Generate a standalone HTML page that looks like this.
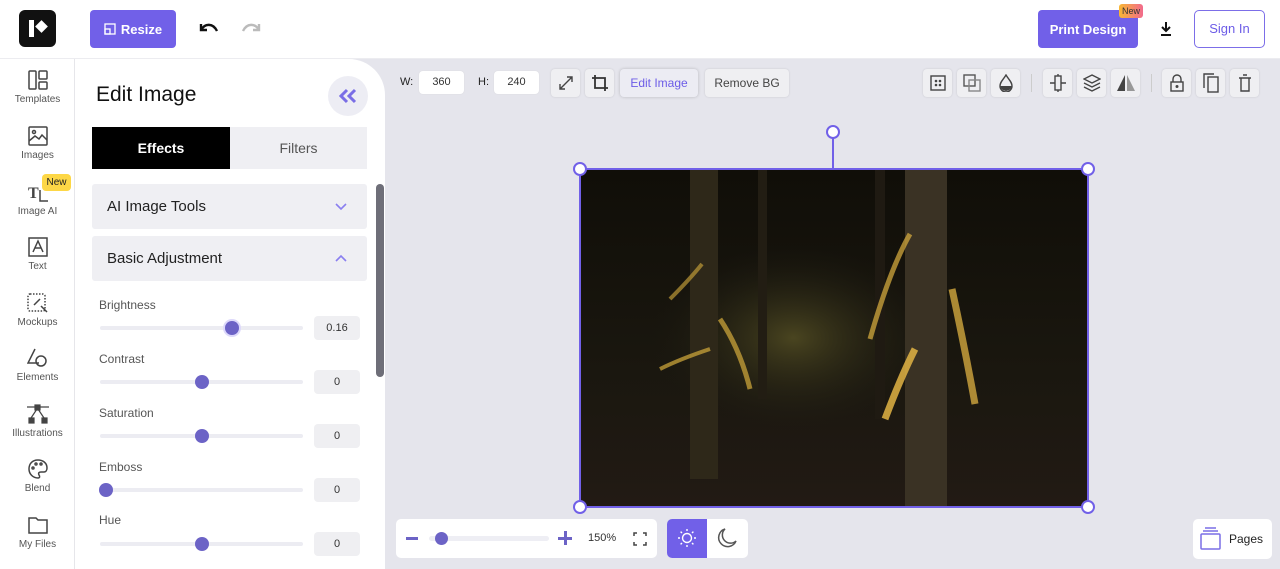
<!DOCTYPE html>
<html><head><meta charset="utf-8"><style>
*{box-sizing:border-box;margin:0;padding:0}
body{width:1280px;height:569px;overflow:hidden;font-family:"Liberation Sans",sans-serif;background:#e5e5ec;position:relative;color:#222}
.abs{position:absolute}
.top{left:0;top:0;width:1280px;height:59px;background:#fff;border-bottom:1px solid #ececf0}
.btnp{background:#7160e8;color:#fff;font-weight:bold;font-size:13px;border-radius:4px;display:flex;align-items:center;justify-content:center}
.side{left:0;top:59px;width:75px;height:510px;background:#fff;border-right:1px solid #e6e6ea}
.si{position:absolute;left:0;width:75px;text-align:center;font-size:10px;color:#555}
.si svg{display:block;margin:0 auto 4px}
.panel{left:75px;top:59px;width:310px;height:510px;background:#fff;border-top-right-radius:36px}
.acc{position:absolute;left:17px;width:275px;height:45px;background:#efeff3;border-radius:3px;font-size:15px;padding:14px 15px;color:#222}
.lab{position:absolute;left:24px;font-size:12px;color:#555}
.track{position:absolute;left:25px;width:203px;height:4px;background:#ececf2;border-radius:2px}
.knob{position:absolute;width:14px;height:14px;border-radius:50%;background:#6c63c6}
.val{position:absolute;left:239px;width:46px;height:24px;background:#efeff2;border-radius:4px;font-size:11px;color:#333;text-align:center;line-height:24px}
.tb{position:absolute;top:69px;height:28px;background:#efeff2;border-radius:4px;box-shadow:0 0 2px rgba(0,0,0,.12)}
.ti{position:absolute;top:69px;width:29px;height:28px;background:#efeff2;border-radius:4px;box-shadow:0 0 2px rgba(0,0,0,.12);display:flex;align-items:center;justify-content:center}
.hd{position:absolute;width:14px;height:14px;border:2px solid #7160e8;background:#fff;border-radius:50%}
</style></head><body>
<div class="abs top"></div>
<div class="abs" style="left:19px;top:10px;width:37px;height:37px;background:#111;border-radius:6px"><div class="abs" style="left:10px;top:10px;width:5px;height:17px;background:#fff"></div><div class="abs" style="left:18px;top:12px;width:9px;height:9px;background:#fff;transform:rotate(45deg)"></div></div>
<div class="abs btnp" style="left:90px;top:10px;width:86px;height:38px"><svg width="12" height="12" viewBox="0 0 12 12" style="margin-right:5px"><rect x="1" y="1" width="10" height="10" fill="none" stroke="#fff" stroke-width="1.3"/><rect x="1" y="6" width="5" height="5" fill="none" stroke="#fff" stroke-width="1.3"/></svg>Resize</div>
<svg class="abs" style="left:197px;top:20px" width="22" height="16" viewBox="0 0 22 16"><path d="M4 4 L4 10 L10 10" fill="none" stroke="#111" stroke-width="2.4"/><path d="M4 10 C8 3 16 3 20 11" fill="none" stroke="#111" stroke-width="2.4"/></svg>
<svg class="abs" style="left:241px;top:20px" width="22" height="16" viewBox="0 0 22 16"><path d="M18 4 L18 10 L12 10" fill="none" stroke="#bbb" stroke-width="2.4"/><path d="M18 10 C14 3 6 3 2 11" fill="none" stroke="#bbb" stroke-width="2.4"/></svg>
<div class="abs btnp" style="left:1038px;top:10px;width:100px;height:38px">Print Design</div>
<div class="abs" style="left:1119px;top:4px;width:24px;height:14px;background:linear-gradient(90deg,#f8b732,#f26a8d);border-radius:3px;font-size:9px;color:#333;text-align:center;line-height:14px">New</div>
<svg class="abs" style="left:1159px;top:21px" width="14" height="16" viewBox="0 0 14 16"><path d="M7 1 V10 M3 6 L7 10 L11 6 M2 14 H12" fill="none" stroke="#111" stroke-width="2"/></svg>
<div class="abs" style="left:1194px;top:10px;width:71px;height:38px;border:1.5px solid #7c6ee8;border-radius:5px;color:#6c5ce7;font-size:13px;text-align:center;line-height:35px">Sign In</div>

<div class="abs side">
<div class="si" style="top:11px"><svg width="20" height="20" viewBox="0 0 20 20" fill="none" stroke="#444" stroke-width="1.5"><rect x="1" y="1" width="7" height="18" rx="1"/><rect x="11" y="1" width="8" height="8" rx="1"/><rect x="11" y="12" width="8" height="7" rx="1"/></svg>Templates</div>
<div class="si" style="top:67px"><svg width="20" height="20" viewBox="0 0 20 20" fill="none" stroke="#444" stroke-width="1.5"><rect x="1" y="1" width="18" height="18" rx="1"/><circle cx="6" cy="6" r="1.5"/><path d="M1 15 L7 10 L11 13 L14 9 L19 14"/></svg>Images</div>
<div class="si" style="top:123px"><svg width="24" height="20" viewBox="0 0 24 20"><text x="2" y="16" font-family="Liberation Serif" font-size="16" font-weight="bold" fill="#444">T</text><path d="M14 8 V19 L22 19" fill="none" stroke="#444" stroke-width="1.5"/></svg>Image AI</div>
<div class="si" style="top:178px"><svg width="20" height="20" viewBox="0 0 20 20" fill="none" stroke="#444" stroke-width="1.5"><rect x="1" y="1" width="18" height="18"/><path d="M5 15 L10 4 L15 15 M7 11 H13"/></svg>Text</div>
<div class="si" style="top:234px"><svg width="22" height="20" viewBox="0 0 22 20" fill="none" stroke="#444" stroke-width="1.5"><rect x="1" y="1" width="17" height="17" rx="2" stroke-dasharray="1.5 1.5"/><path d="M7 12 L13 6 M14 13 L20 19"/></svg>Mockups</div>
<div class="si" style="top:289px"><svg width="22" height="20" viewBox="0 0 22 20" fill="none" stroke="#444" stroke-width="1.5"><path d="M8 1 L1 15 H12"/><circle cx="14" cy="13" r="5"/></svg>Elements</div>
<div class="si" style="top:345px"><svg width="24" height="20" viewBox="0 0 24 20" fill="#444" stroke="#444" stroke-width="1.2"><rect x="9" y="1" width="5" height="5"/><rect x="3" y="14" width="5" height="5"/><rect x="16" y="14" width="5" height="5"/><path d="M1 3 H23 M5 14 L11 5 M18 14 L12 5" fill="none"/></svg>Illustrations</div>
<div class="si" style="top:400px"><svg width="20" height="20" viewBox="0 0 20 20" fill="none" stroke="#444" stroke-width="1.5"><path d="M10 1 C4 1 1 5 1 10 C1 15 5 19 10 19 C12 19 12 17 11 16 C10 14 11 13 13 13 H16 C18 13 19 11 19 9 C19 4 15 1 10 1Z"/><circle cx="5" cy="9" r="1"/><circle cx="8" cy="5" r="1"/><circle cx="13" cy="5" r="1"/></svg>Blend</div>
<div class="si" style="top:456px"><svg width="20" height="20" viewBox="0 0 20 20" fill="none" stroke="#444" stroke-width="1.5"><path d="M1 3 H8 L10 5 H19 V18 H1 Z"/></svg>My Files</div>
<div class="abs" style="left:42px;top:115px;width:29px;height:17px;background:#fdd746;border-radius:4px;font-size:10px;color:#222;text-align:center;line-height:17px">New</div>
</div>

<div class="abs panel">
<div class="abs" style="left:21px;top:24px;font-size:21px;color:#111">Edit Image</div>
<div class="abs" style="left:253px;top:17px;width:40px;height:40px;border-radius:50%;background:#ededf4"><svg class="abs" style="left:10px;top:12px" width="20" height="16" viewBox="0 0 20 16" fill="none" stroke="#7a6ee6" stroke-width="3"><path d="M9 2 L3 8 L9 14 M17 2 L11 8 L17 14"/></svg></div>
<div class="abs" style="left:17px;top:68px;width:138px;height:42px;background:#000;color:#fff;font-weight:bold;font-size:14px;text-align:center;line-height:42px">Effects</div>
<div class="abs" style="left:155px;top:68px;width:137px;height:42px;background:#efeff3;color:#555;font-size:14px;text-align:center;line-height:42px">Filters</div>
<div class="acc" style="top:125px">AI Image Tools<svg class="abs" style="right:20px;top:19px" width="12" height="8" viewBox="0 0 12 8" fill="none" stroke="#8a7ff0" stroke-width="1.6"><path d="M1 1 L6 6 L11 1"/></svg></div>
<div class="acc" style="top:177px">Basic Adjustment<svg class="abs" style="right:20px;top:18px" width="12" height="8" viewBox="0 0 12 8" fill="none" stroke="#8a7ff0" stroke-width="1.6"><path d="M1 7 L6 2 L11 7"/></svg></div>
<div class="lab" style="top:239px">Brightness</div><div class="track" style="top:267px"></div><div class="knob" style="left:150px;top:262px;box-shadow:0 0 0 2px #ddd9fb"></div><div class="val" style="top:257px">0.16</div>
<div class="lab" style="top:293px">Contrast</div><div class="track" style="top:321px"></div><div class="knob" style="left:120px;top:316px"></div><div class="val" style="top:311px">0</div>
<div class="lab" style="top:347px">Saturation</div><div class="track" style="top:375px"></div><div class="knob" style="left:120px;top:370px"></div><div class="val" style="top:365px">0</div>
<div class="lab" style="top:401px">Emboss</div><div class="track" style="top:429px"></div><div class="knob" style="left:24px;top:424px"></div><div class="val" style="top:419px">0</div>
<div class="lab" style="top:454px">Hue</div><div class="track" style="top:483px"></div><div class="knob" style="left:120px;top:478px"></div><div class="val" style="top:473px">0</div>
<div class="abs" style="left:301px;top:125px;width:8px;height:193px;background:#6e6e78;border-radius:4px"></div>
</div>

<div class="abs" style="left:400px;top:76px;font-size:11px;color:#222">W:</div>
<div class="abs" style="left:418px;top:70px;width:47px;height:25px;background:#fff;border:1px solid #e2e2e8;border-radius:5px;font-size:11px;text-align:center;line-height:23px;color:#333">360</div>
<div class="abs" style="left:478px;top:76px;font-size:11px;color:#222">H:</div>
<div class="abs" style="left:493px;top:70px;width:47px;height:25px;background:#fff;border:1px solid #e2e2e8;border-radius:5px;font-size:11px;text-align:center;line-height:23px;color:#333">240</div>
<div class="ti" style="left:551px"><svg width="16" height="16" viewBox="0 0 16 16" fill="none" stroke="#444" stroke-width="1.4"><path d="M2 14 L14 2 M9 2 H14 V7 M2 9 V14 H7"/></svg></div>
<div class="ti" style="left:585px"><svg width="18" height="18" viewBox="0 0 18 18" fill="none" stroke="#333" stroke-width="1.8"><path d="M4 1 V14 H17 M1 4 H14 V17"/></svg></div>
<div class="tb" style="left:620px;width:78px;background:#ececf3;color:#6c5ce7;font-size:12px;text-align:center;line-height:28px;box-shadow:0 0 3px rgba(0,0,0,.2)">Edit Image</div>
<div class="tb" style="left:705px;width:84px;color:#444;font-size:12px;text-align:center;line-height:28px">Remove BG</div>
<div class="ti" style="left:923px"><svg width="16" height="16" viewBox="0 0 16 16" fill="none" stroke="#444" stroke-width="1.4"><rect x="1" y="1" width="14" height="14"/><circle cx="6" cy="6" r=".6" fill="#444"/><circle cx="10" cy="6" r=".6" fill="#444"/><circle cx="6" cy="10" r=".6" fill="#444"/><circle cx="10" cy="10" r=".6" fill="#444"/></svg></div>
<div class="ti" style="left:957px"><svg width="18" height="18" viewBox="0 0 18 18" fill="none" stroke="#555" stroke-width="1.4"><rect x="1" y="1" width="11" height="11"/><rect x="6" y="6" width="11" height="11" stroke="#888"/></svg></div>
<div class="ti" style="left:991px"><svg width="14" height="18" viewBox="0 0 14 18"><path d="M7 1 C4 6 1 8 1 12 A6 6 0 0 0 13 12 C13 8 10 6 7 1Z" fill="none" stroke="#444" stroke-width="1.4"/><path d="M1.5 12 H12.5 A5.5 5 0 0 1 1.5 12Z" fill="#444"/></svg></div>
<div class="abs" style="left:1031px;top:74px;width:1px;height:18px;background:#ccc"></div>
<div class="ti" style="left:1043px"><svg width="18" height="20" viewBox="0 0 18 20" fill="none" stroke="#444" stroke-width="1.4"><path d="M1 10 H17 M9 1 V3 M9 17 V19"/><rect x="6" y="3" width="6" height="14" fill="#efeff2"/></svg></div>
<div class="ti" style="left:1077px"><svg width="18" height="18" viewBox="0 0 18 18" fill="none" stroke="#444" stroke-width="1.4"><path d="M9 1 L17 5 L9 9 L1 5Z M1 9 L9 13 L17 9 M1 13 L9 17 L17 13"/></svg></div>
<div class="ti" style="left:1111px"><svg width="20" height="18" viewBox="0 0 20 18"><path d="M9 1 L1 17 H9Z" fill="#444"/><path d="M11 1 L19 17 H11Z" fill="#999"/></svg></div>
<div class="abs" style="left:1151px;top:74px;width:1px;height:18px;background:#ccc"></div>
<div class="ti" style="left:1162px"><svg width="14" height="18" viewBox="0 0 14 18" fill="none" stroke="#444" stroke-width="1.4"><rect x="1" y="8" width="12" height="9"/><path d="M3 8 V5 A4 4 0 0 1 11 5 V8"/><circle cx="7" cy="12.5" r=".8" fill="#444"/></svg></div>
<div class="ti" style="left:1196px"><svg width="16" height="20" viewBox="0 0 16 20" fill="none" stroke="#444" stroke-width="1.4"><rect x="5" y="4" width="10" height="15"/><path d="M1 15 V1 H11"/></svg></div>
<div class="ti" style="left:1230px"><svg width="14" height="18" viewBox="0 0 14 18" fill="none" stroke="#444" stroke-width="1.4"><path d="M1 4 H13 M5 1 H9 M3 4 V17 H11 V4"/></svg></div>

<div class="abs" style="left:832px;top:138px;width:2px;height:31px;background:#7160e8"></div>
<div class="hd" style="left:826px;top:125px"></div>
<svg class="abs" style="left:580px;top:169px" width="508" height="338" viewBox="0 0 508 338">
<defs><radialGradient id="g1" cx="0.42" cy="0.5" r="0.28"><stop offset="0" stop-color="#4a4520"/><stop offset="1" stop-color="#1c1a12" stop-opacity="0"/></radialGradient>
<linearGradient id="bg" x1="0" y1="0" x2="0" y2="1"><stop offset="0" stop-color="#100e08"/><stop offset=".6" stop-color="#1a170f"/><stop offset="1" stop-color="#221a14"/></linearGradient></defs>
<rect width="508" height="338" fill="url(#bg)"/>
<rect width="508" height="338" fill="url(#g1)"/>
<rect x="110" y="0" width="28" height="310" fill="#2e2819"/>
<rect x="178" y="0" width="9" height="230" fill="#221d13"/>
<rect x="325" y="0" width="42" height="338" fill="#3a3224"/>
<rect x="295" y="0" width="10" height="250" fill="#1f1a12"/>
<path d="M80 200 Q100 190 130 180" stroke="#c9a33a" stroke-width="4" fill="none" opacity=".75"/>
<path d="M140 150 Q160 180 170 220" stroke="#c9a33a" stroke-width="5" fill="none" opacity=".75"/>
<path d="M90 130 Q110 110 122 95" stroke="#c9a33a" stroke-width="4" fill="none" opacity=".65"/>
<path d="M290 170 Q310 100 330 65" stroke="#d2a83e" stroke-width="5" fill="none" opacity=".75"/>
<path d="M305 250 Q320 210 335 180" stroke="#e2b444" stroke-width="7" fill="none" opacity=".85"/>
<path d="M372 120 Q385 180 395 235" stroke="#d2a83e" stroke-width="7" fill="none" opacity=".8"/>
</svg>
<div class="abs" style="left:579px;top:168px;width:510px;height:340px;border:2px solid #7160e8"></div>
<div class="hd" style="left:573px;top:162px"></div><div class="hd" style="left:1081px;top:162px"></div>
<div class="hd" style="left:573px;top:500px"></div><div class="hd" style="left:1081px;top:500px"></div>

<div class="abs" style="left:396px;top:519px;width:261px;height:39px;background:#fff;border-radius:5px"></div>
<div class="abs" style="left:406px;top:537px;width:12px;height:2.5px;background:#6c63c6"></div>
<div class="abs" style="left:429px;top:536px;width:120px;height:5px;background:#eeeef4;border-radius:3px"></div>
<div class="abs knob" style="left:435px;top:532px;width:13px;height:13px"></div>
<div class="abs" style="left:558px;top:537px;width:14px;height:2.5px;background:#6c63c6"></div>
<div class="abs" style="left:564px;top:531px;width:2.5px;height:14px;background:#6c63c6"></div>
<div class="abs" style="left:588px;top:532px;font-size:11px;color:#333">150%</div>
<svg class="abs" style="left:633px;top:532px" width="14" height="14" viewBox="0 0 14 14" fill="none" stroke="#444" stroke-width="1.5"><path d="M1 4 V1 H4 M10 1 H13 V4 M13 10 V13 H10 M4 13 H1 V10"/></svg>
<div class="abs" style="left:667px;top:519px;width:81px;height:39px;background:#fff;border-radius:5px;overflow:hidden"><div class="abs" style="left:0;top:0;width:40px;height:39px;background:#7160e8"></div></div>
<svg class="abs" style="left:677px;top:528px" width="20" height="20" viewBox="0 0 20 20" fill="none" stroke="#fff" stroke-width="1.4"><circle cx="10" cy="10" r="4.5"/><path d="M10 1 V3 M10 17 V19 M1 10 H3 M17 10 H19 M3.6 3.6 L5 5 M15 15 L16.4 16.4 M3.6 16.4 L5 15 M15 5 L16.4 3.6"/></svg>
<svg class="abs" style="left:716px;top:527px" width="22" height="22" viewBox="0 0 22 22" fill="none" stroke="#555" stroke-width="1.5"><path d="M9 2 A9 9 0 1 0 20 14 A8 8 0 0 1 9 2Z"/></svg>
<div class="abs" style="left:1193px;top:519px;width:79px;height:40px;background:#fff;border-radius:5px"></div>
<svg class="abs" style="left:1200px;top:527px" width="22" height="24" viewBox="0 0 22 24" fill="none" stroke="#7a6ee6" stroke-width="1.5"><rect x="1" y="7" width="19" height="15" rx="1"/><path d="M3 4 H18 M5 1 H16"/></svg>
<div class="abs" style="left:1229px;top:532px;font-size:12px;color:#222">Pages</div>
</body></html>
